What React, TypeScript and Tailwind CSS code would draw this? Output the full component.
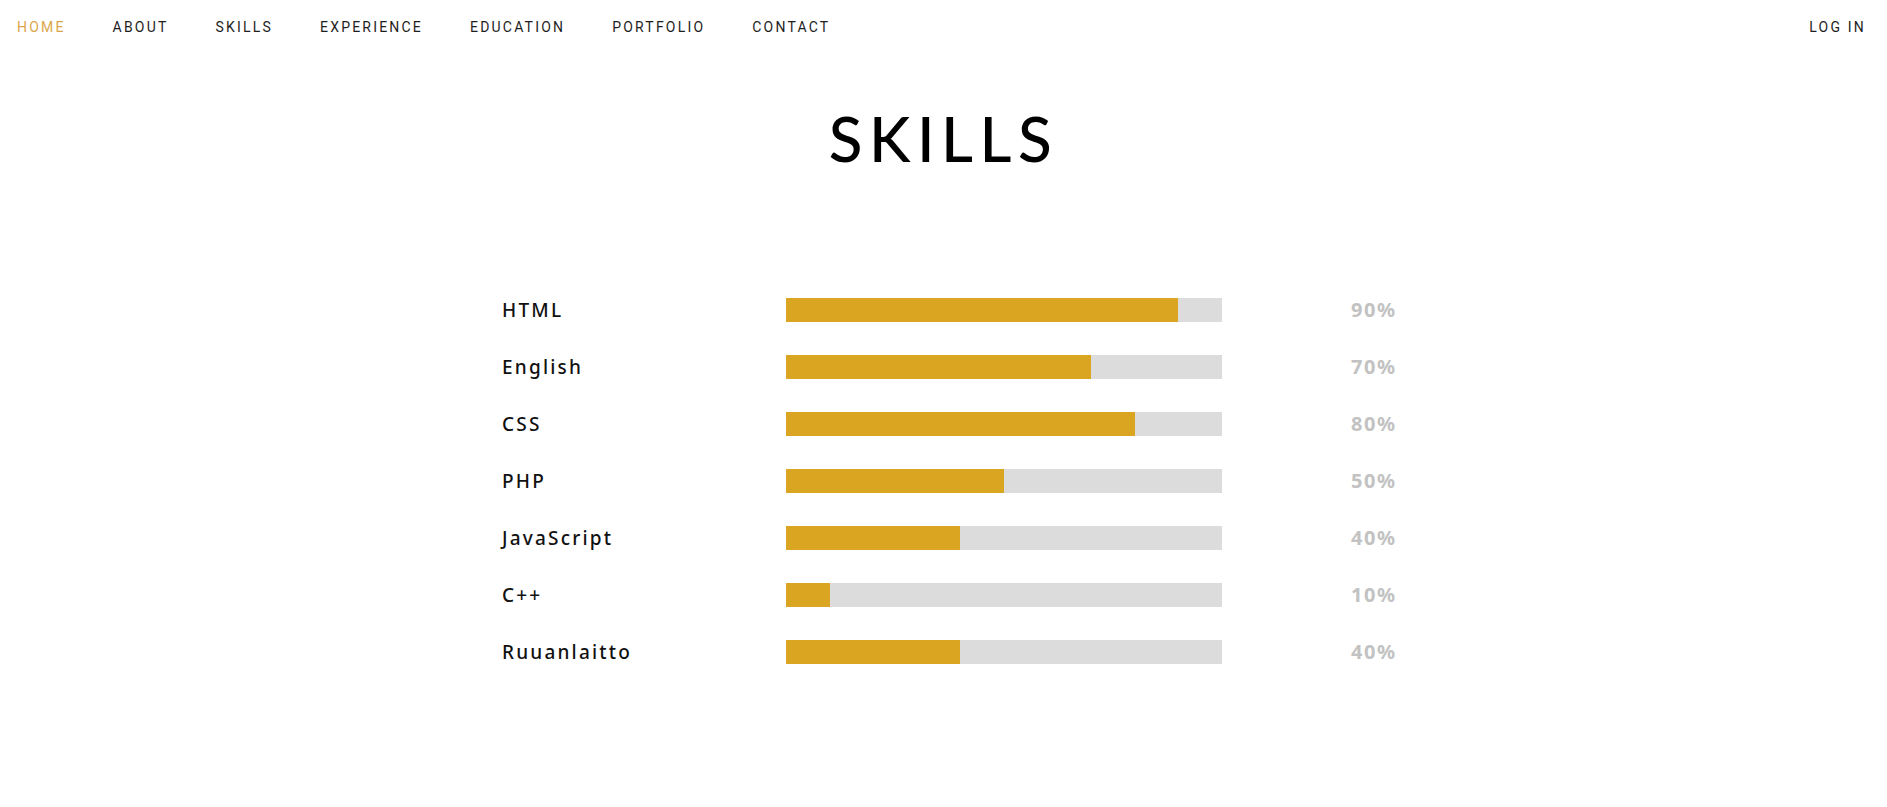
import React from "react";

const navItems = ["HOME", "ABOUT", "SKILLS", "EXPERIENCE", "EDUCATION", "PORTFOLIO", "CONTACT"];

const skills: { name: string; value: number }[] = [
  { name: "HTML", value: 90 },
  { name: "English", value: 70 },
  { name: "CSS", value: 80 },
  { name: "PHP", value: 50 },
  { name: "JavaScript", value: 40 },
  { name: "C++", value: 10 },
  { name: "Ruuanlaitto", value: 40 },
];

export default function App() {
  return (
    <div className="min-h-[807px] bg-white">
      <nav className="flex h-[54px] items-center justify-between pl-[17px] pr-[21px] font-['Roboto',sans-serif] text-[14px] tracking-[2.2px] text-[#1e1e1e]">
        <ul className="flex items-center gap-[47px]">
          {navItems.map((item, i) => (
            <li key={item} className={i === 0 ? "text-[#dba64a]" : ""}>
              {item}
            </li>
          ))}
        </ul>
        <span>LOG IN</span>
      </nav>

      <h1 className="mt-[52px] text-center font-['Lato',sans-serif] text-[62px] font-medium leading-[64px] tracking-[6.5px] text-black">
        SKILLS
      </h1>

      <div className="mt-[128px] flex flex-col gap-[33px] pl-[502px]">
        {skills.map((s) => (
          <div key={s.name} className="flex h-[24px] items-center">
            <span className="w-[284px] font-['Noto_Sans',sans-serif] text-[19px] font-medium tracking-[2.2px] text-[#111]">
              {s.name}
            </span>
            <div className="h-[24px] w-[436px] bg-[#dcdcdc]">
              <div className="h-full bg-[#daa520]" style={{ width: `${s.value}%` }} />
            </div>
            <span className="ml-[129px] font-['Noto_Sans',sans-serif] text-[20px] font-bold tracking-[1.6px] text-[#c2c2c2]">
              {s.value}%
            </span>
          </div>
        ))}
      </div>
    </div>
  );
}
